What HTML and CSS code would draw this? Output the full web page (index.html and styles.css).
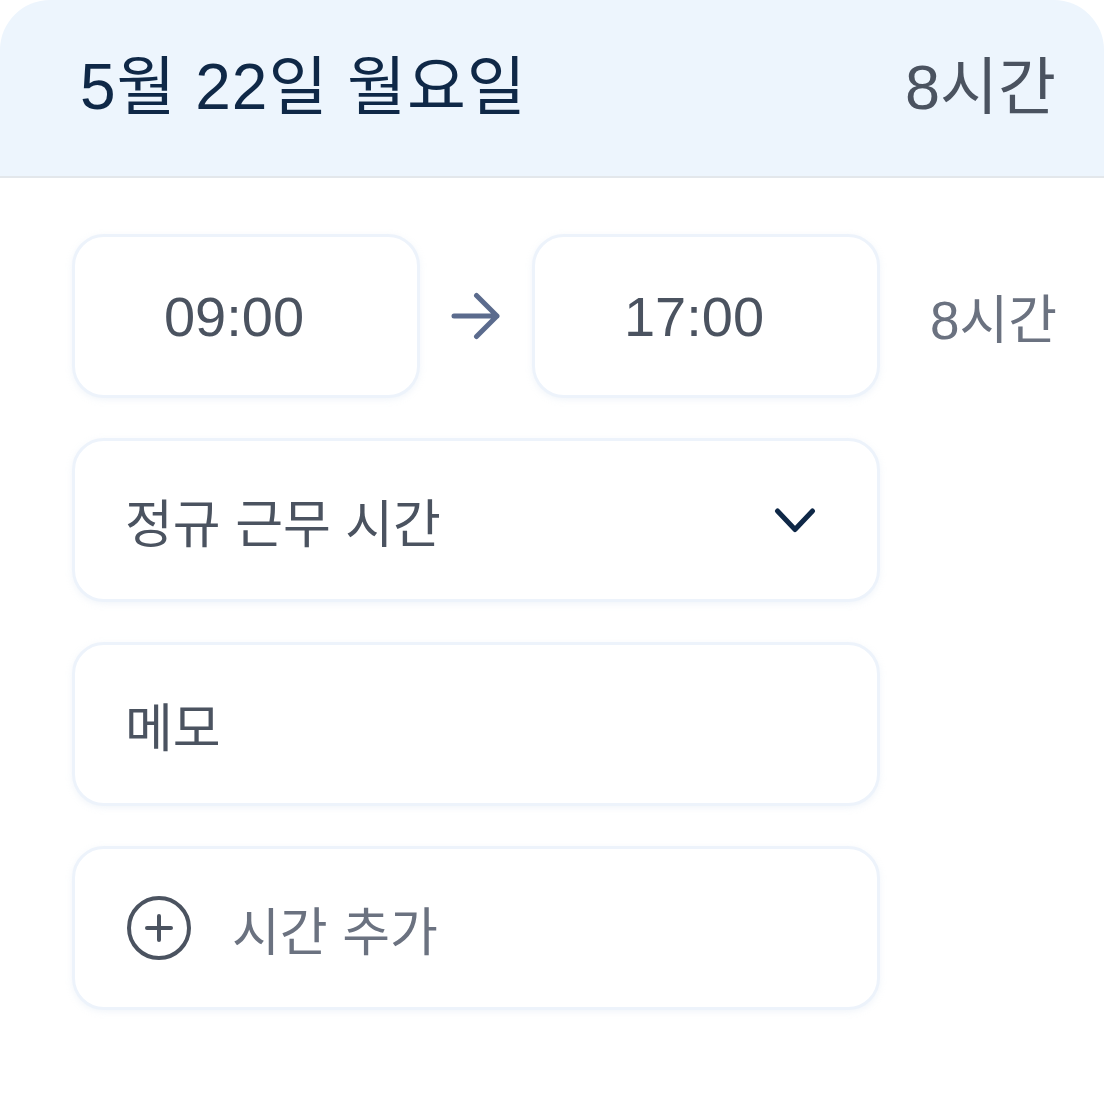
FILE: index.html
```html
<!DOCTYPE html>
<html lang="ko">
<head>
  <meta charset="UTF-8" />
  <title>근무 시간</title>
  <link rel="stylesheet" href="styles.css">
</head>
<body>
  <div class="day-card">
    <header class="day-header">
      <span class="day-title">5월 22일 월요일</span>
      <span class="day-total">8시간</span>
    </header>
    <div class="day-body">
      <div class="time-row">
        <div class="field time-field">09:00</div>
        <div class="arrow">
          <svg width="50" height="48" viewBox="0 0 50 48" fill="none" stroke="#5b6b8d" stroke-width="5" stroke-linecap="round" stroke-linejoin="round">
            <path d="M3 24H46M25.5 3.5L46 24 25.5 44.5"/>
          </svg>
        </div>
        <div class="field time-field">17:00</div>
        <span class="row-total">8시간</span>
      </div>
      <div class="field wide-field select-field">
        <span>정규 근무 시간</span>
        <svg width="44" height="30" viewBox="0 0 44 30" fill="none" stroke="#0f2847" stroke-width="5" stroke-linecap="round" stroke-linejoin="round">
          <path d="M4.5 6L22 24.5 39.5 6"/>
        </svg>
      </div>
      <div class="field wide-field">
        <span class="memo">메모</span>
      </div>
      <div class="field wide-field add-field">
        <svg width="66" height="66" viewBox="0 0 66 66" fill="none" stroke="#4b5360" stroke-width="4" stroke-linecap="round">
          <circle cx="33" cy="33" r="30"/>
          <path d="M33 21v24M21 33h24"/>
        </svg>
        <span class="add-label">시간 추가</span>
      </div>
    </div>
  </div>
</body>
</html>
```

FILE: styles.css
```css
body {
  margin: 0;
  background: #fff;
  font-family: "Liberation Sans", "Noto Sans CJK KR", sans-serif;
}

.day-card {
  width: 1104px;
  height: 1100px;
  background: #fff;
  border-radius: 50px 50px 0 0;
  overflow: hidden;
}

.day-header {
  height: 178px;
  box-sizing: border-box;
  background: #edf5fd;
  border-bottom: 2px solid #e3e7eb;
  display: flex;
  align-items: center;
  justify-content: space-between;
  padding: 0 48px 14px 80px;
}

.day-title {
  font-size: 64px;
  color: #0f2847;
  letter-spacing: 1px;
}

.day-total {
  font-size: 63px;
  color: #4b5360;
}

.day-body {
  padding: 56px 0 0 72px;
  display: flex;
  flex-direction: column;
  gap: 40px;
}

.time-row {
  display: flex;
  align-items: center;
}

.field {
  box-sizing: border-box;
  height: 164px;
  background: #fff;
  border: 3px solid #edf3fb;
  border-radius: 32px;
  box-shadow: 0 2px 6px rgba(200, 215, 235, 0.25);
  display: flex;
  align-items: center;
}

.time-field {
  width: 348px;
  justify-content: center;
  padding-right: 24px;
  font-size: 56px;
  color: #4b5360;
}

.arrow {
  width: 112px;
  display: flex;
  justify-content: center;
}

.row-total {
  margin-left: 50px;
  font-size: 53px;
  color: #6b7280;
}

.wide-field {
  width: 808px;
  padding: 0 60px 0 50px;
}

.select-field {
  justify-content: space-between;
  font-size: 52px;
  color: #4b5360;
}

.memo {
  font-size: 52px;
  color: #4b5360;
}

.add-field {
  padding-left: 51px;
  gap: 40px;
}

.add-label {
  font-size: 52px;
  color: #6b7280;
}
```
